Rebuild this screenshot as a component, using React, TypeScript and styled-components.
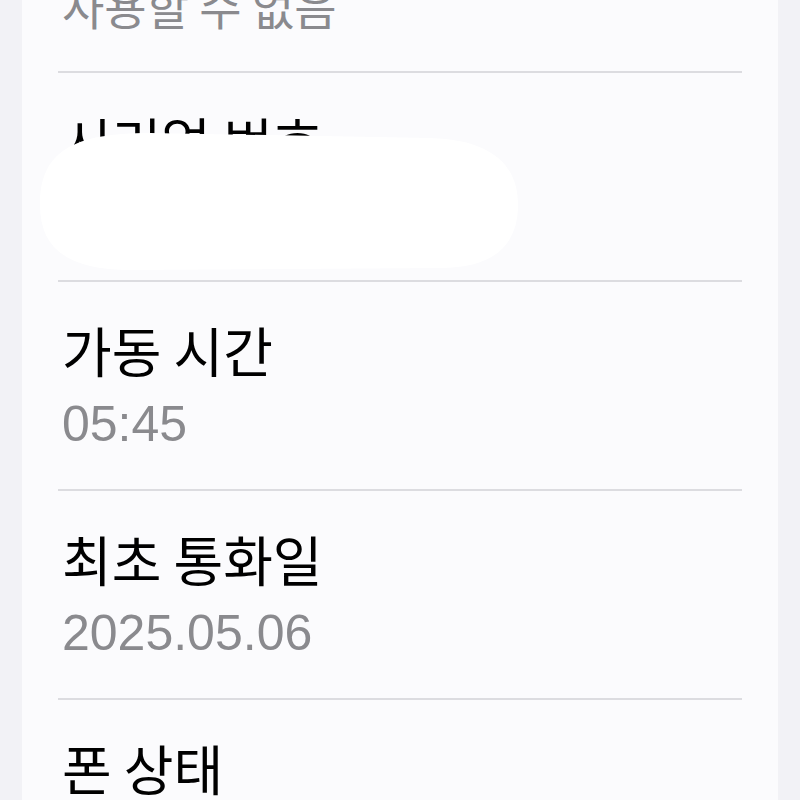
import React from 'react';
import styled, { createGlobalStyle } from 'styled-components';

const GlobalStyle = createGlobalStyle`
  html, body {
    margin: 0;
    padding: 0;
    background: #f2f2f6;
    overflow: hidden;
  }
  #root {
    height: 800px;
  }
`;

type Item = { title: string; value?: string };

const items: Item[] = [
    { title: '모델 번호', value: '사용할 수 없음' },
    { title: '시리얼 번호', value: ' ' },
    { title: '가동 시간', value: '05:45' },
    { title: '최초 통화일', value: '2025.05.06' },
    { title: '폰 상태' },
];

const hasHangul = (text: string) => /[가-힣]/.test(text);

function App() {
    return (
        <>
            <GlobalStyle />
            <Page>
                <Card>
                    <List>
                        {items.map((item) => (
                            <Row key={item.title}>
                                <Title>{item.title}</Title>
                                {item.value !== undefined && (
                                    <Value $korean={hasHangul(item.value)}>{item.value}</Value>
                                )}
                            </Row>
                        ))}
                    </List>
                    {/* redaction scribble over the serial number */}
                    <Redaction viewBox="0 0 800 800" aria-hidden>
                        <path d="M 40 205 C 40 152, 72 133, 150 133 L 430 138 C 498 140, 518 170, 518 205 C 518 245, 494 268, 440 268 L 130 270 C 70 270, 40 250, 40 205 Z" fill="#ffffff" />
                    </Redaction>
                </Card>
            </Page>
        </>
    );
}

const Page = styled('div')`
    height: 800px;
    padding: 0 22px;
    background: #f2f2f6;
    overflow: hidden;
`;

const Card = styled('div')`
    position: relative;
    height: 800px;
    background: #fbfbfd;
    padding: 0 36px;
    overflow: hidden;
`;

const List = styled('div')`
    display: flex;
    flex-direction: column;
    margin-top: -136px;
`;

const Row = styled('div')`
    height: 207px;
    display: flex;
    flex-direction: column;
    justify-content: center;
    gap: 6px;
    padding-left: 4px;
    border-bottom: 2px solid #dcdce0;
    &:last-child {
        border-bottom: none;
        justify-content: flex-start;
        padding-top: 35px;
    }
`;

const Title = styled('div')`
    font-family: "Noto Sans CJK KR", "Noto Sans", sans-serif;
    font-size: 54px;
    font-weight: 400;
    line-height: 66px;
    color: #000000;
`;

const Value = styled('div')<{ $korean?: boolean }>`
    font-family: ${(p) => (p.$korean ? '"Noto Sans CJK KR", sans-serif' : '"Liberation Sans", sans-serif')};
    font-size: ${(p) => (p.$korean ? '46px' : '50px')};
    line-height: 60px;
    padding-top: ${(p) => (p.$korean ? '2px' : '5px')};
    color: #8a8a8e;
    white-space: pre;
`;

const Redaction = styled('svg')`
    position: absolute;
    left: -22px;
    top: 0;
    width: 800px;
    height: 800px;
    pointer-events: none;
`;

export default App;
